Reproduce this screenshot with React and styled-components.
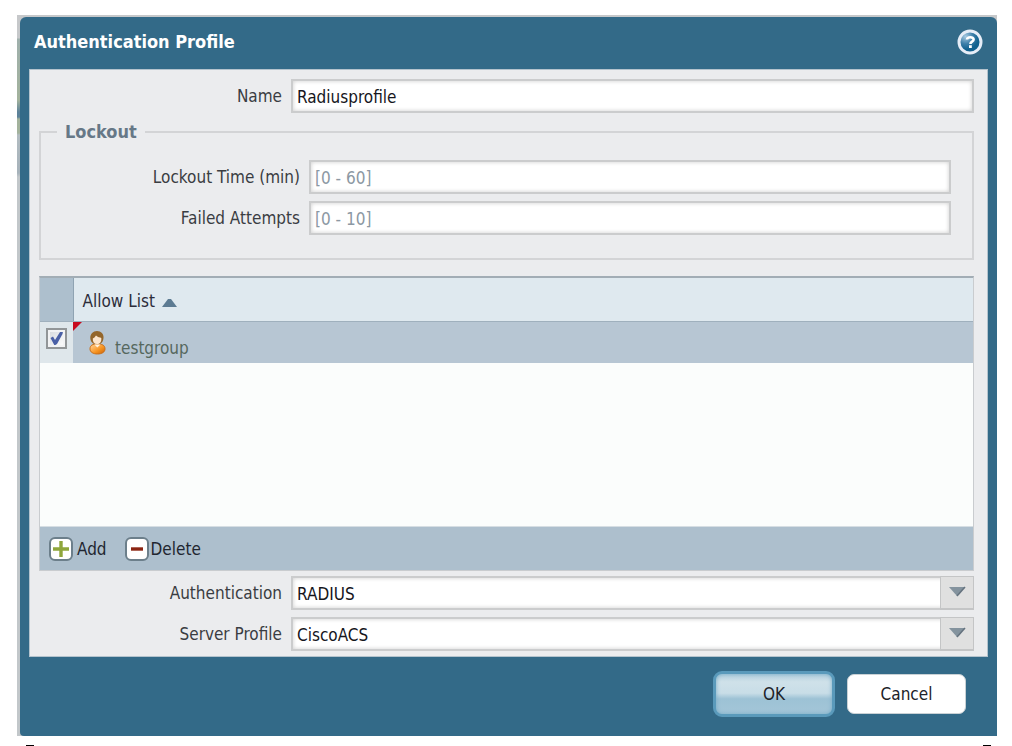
import { useState } from "react";
import styled, { createGlobalStyle } from "styled-components";

const GlobalStyle = createGlobalStyle`
  * {
    box-sizing: border-box;
  }

  body {
    margin: 0;
    background: #ffffff;
    color: #3a3d42;
    font-family: "DejaVu Sans Condensed", "Noto Sans", sans-serif;
    font-size: 17px;
    line-height: 20px;
  }

  input, select, button {
    font: inherit;
  }
`;

const Page = styled.main`
  padding: 15px 15px 0 17px;
`;

const Dialog = styled.section`
  padding: 2px 0 0 3px;
  background: linear-gradient(
    #c6c8ca 23px,
    #9fb0ac 24px,
    #a3b29c 85px,
    #5d8299 97px,
    #5d8299 102px,
    #a3b29c 104px,
    #a3b29c 118px,
    #b2bcc1 120px,
    #a6b2ba 158px,
    #c2c7ca 162px
  );
`;

const DialogInner = styled.div`
  padding: 0 9px;
  background: #336a88;
  border-radius: 6px 6px 0 4px;
`;

const TitleBar = styled.header`
  display: flex;
  align-items: center;
  justify-content: space-between;
  height: 52px;
  padding: 0 5px 2px;
`;

const Title = styled.h1`
  margin: 0;
  color: #ffffff;
  font-size: 18px;
  font-weight: bold;
`;

const HelpButton = styled.button`
  display: flex;
  padding: 0;
  border: 0;
  background: none;
  cursor: pointer;
`;

const Body = styled.div`
  padding: 9px 13px 5px 9px;
  background: #ebecee;
  border: 1px solid #b4c3cd;
`;

const FormRow = styled.div`
  display: flex;
  gap: 9px;
  height: 34px;
  margin-bottom: ${(props) => (props.$last ? 0 : 7)}px;
`;

const Label = styled.label`
  width: 243px;
  flex: none;
  padding-top: 7px;
  text-align: right;
`;

const TextInput = styled.input`
  flex: 1;
  min-width: 0;
  padding: 2px 4px 0;
  border: 2px solid #cbcccd;
  border-radius: 0;
  outline: none;
  background: #ffffff;
  box-shadow: inset 0 0 4px #cccccc;
  color: #16161c;

  &::placeholder {
    color: #8c98a3;
    opacity: 1;
  }
`;

const LockoutGroup = styled.fieldset`
  min-width: 0;
  margin: 9px 0 16px;
  padding: 18px 21px 23px 16px;
  border: 2px solid #d3d4d6;
`;

const Legend = styled.legend`
  padding: 0 8px;
  color: #667887;
  font-size: 18px;
  font-weight: bold;
`;

const Grid = styled.div`
  margin-bottom: 5px;
  border: 1px solid #c9cccf;
  border-top: 2px solid #a2adb5;
  background: #fbfdfc;
`;

const GridBody = styled.div`
  min-height: 248px;
`;

const AllowTable = styled.table`
  width: 100%;
  border-collapse: collapse;
  table-layout: fixed;
`;

const CheckHead = styled.th`
  width: 33px;
  padding: 0;
  background: #adbfcd;
  border-right: 1px solid #8fa3b2;
  border-bottom: 1px solid #9fb0bd;
`;

const ListHead = styled.th`
  height: 43px;
  padding: 3px 9px 0;
  background: #dfe9ef;
  border-bottom: 1px solid #9fb0bd;
  font-weight: normal;
  text-align: left;
`;

const SortButton = styled.button`
  display: flex;
  align-items: center;
  gap: 7px;
  padding: 0;
  border: 0;
  background: none;
  color: #2c2d3a;

  svg {
    margin-top: 4px;
  }
`;

const CheckCell = styled.td`
  padding: 6px 6px 0;
  background: #dfe7eb;
  vertical-align: top;
`;

const ListCell = styled.td`
  position: relative;
  height: 42px;
  padding: 0 16px;
  background: #b7c6d3;
  color: #56685e;
`;

const Dirty = styled.span`
  position: absolute;
  top: 0;
  left: 0;
  border-top: 9px solid #c80a1e;
  border-right: 9px solid transparent;
`;

const Member = styled.div`
  display: flex;
  align-items: center;
  gap: 9px;

  span {
    padding-top: 12px;
  }
`;

const CheckBox = styled.input`
  display: block;
  width: 21px;
  height: 21px;
  margin: 0;
  appearance: none;
  border: 2px solid #929698;
  background: linear-gradient(135deg, #d4d8dc, #ffffff);
  box-shadow: inset 0 0 0 2px #f2f3f4;

  &:checked {
    background-image: url("data:image/svg+xml,%3Csvg xmlns='http://www.w3.org/2000/svg' viewBox='0 0 17 17'%3E%3Cpath d='M2.5 8 L5 6.5 L7 10 L12 2 L15 1.5 L14.5 4 L9 14 L6.5 15.5 Z' fill='%234a60a6'/%3E%3C/svg%3E"),
      linear-gradient(135deg, #d4d8dc, #ffffff);
  }
`;

const Toolbar = styled.div`
  display: flex;
  gap: 18px;
  height: 44px;
  padding: 0 9px;
  background: #adbfcd;
  border-top: 1px solid #d6dee3;
`;

const ToolButton = styled.button`
  display: flex;
  align-items: center;
  gap: ${(props) => props.$gap}px;
  padding: 0;
  border: 0;
  background: none;
  color: #222630;
`;

const SelectWrap = styled.div`
  position: relative;
  flex: 1;
  min-width: 0;
`;

const Select = styled.select`
  width: 100%;
  height: 34px;
  padding: 2px 40px 0 4px;
  appearance: none;
  border: 2px solid #cbcccd;
  border-radius: 0;
  outline: none;
  background: #ffffff;
  box-shadow: inset 0 0 4px #cccccc;
  color: #16161c;
`;

const Trigger = styled.span`
  position: absolute;
  top: 0;
  right: 0;
  display: flex;
  justify-content: center;
  width: 34px;
  height: 34px;
  padding-top: 9px;
  border: 1px solid #c4c5c6;
  border-bottom-width: 2px;
  background: #e0e0e0;
  pointer-events: none;
`;

const Footer = styled.footer`
  display: flex;
  align-items: center;
  justify-content: flex-end;
  gap: 12px;
  height: 79px;
  padding: 0 22px 5px;
`;

const OkButton = styled.button`
  width: 122px;
  height: 46px;
  border: 3px solid #5a9abb;
  border-radius: 9px;
  background: linear-gradient(#b4d0de, #cfe1e9 20%, #c8dde7 48%, #9dc2d5 62%, #a4c6d8);
  box-shadow: inset 0 0 4px #75aac5;
  color: #202228;
`;

const CancelButton = styled.button`
  width: 119px;
  height: 40px;
  border: 1px solid #c9d1d5;
  border-radius: 7px;
  background: #ffffff;
  color: #202228;
`;

const PageMarks = styled.div`
  display: flex;
  justify-content: space-between;
  padding: 9px 6px 0 9px;
`;

const Mark = styled.span`
  width: 8px;
  height: 1px;
  background: #000000;
`;

const HelpIcon = () => (
  <svg width="26" height="26" viewBox="0 0 26 26" aria-hidden="true">
    <defs>
      <radialGradient id="helpFill" cx="0.3" cy="0.25" r="0.6">
        <stop offset="0" stopColor="#a9cbe2" />
        <stop offset="0.55" stopColor="#3f80aa" />
        <stop offset="1" stopColor="#11618f" />
      </radialGradient>
    </defs>
    <circle cx="13" cy="13" r="11" fill="url(#helpFill)" stroke="#e6edf7" strokeWidth="3" />
    <path
      d="M10 10.5 C10.2 7.4 16.8 7.4 16.6 10.6 C16.5 12.8 13.4 12.6 13.4 15"
      fill="none"
      stroke="#ffffff"
      strokeWidth="2.6"
    />
    <rect x="12" y="16.2" width="2.8" height="2.8" fill="#ffffff" />
  </svg>
);

const UserIcon = () => (
  <svg width="17" height="25" viewBox="0 0 17 25" aria-hidden="true">
    <defs>
      <linearGradient id="userShirt" x1="0" y1="0" x2="1" y2="1">
        <stop offset="0.2" stopColor="#ffc073" />
        <stop offset="0.6" stopColor="#f6921e" />
        <stop offset="1" stopColor="#c4600b" />
      </linearGradient>
    </defs>
    <path
      d="M1 19 C1 15 4 14 8 14 C13 14 16 15 16 19 C16 22 13 24 8.5 24 C4 24 1 22 1 19 Z"
      fill="url(#userShirt)"
      stroke="#c9701b"
      strokeWidth="1"
    />
    <path d="M5.5 14.5 L8.3 17.5 L11.5 14.5 Z" fill="#fff3df" />
    <path d="M8 1 C12 1 15 4 14.5 8 C14.3 11 13 13 11 14 H5 C3 13 1.3 11 1.3 8 C1.3 4 4 1 8 1 Z" fill="#94662a" />
    <path d="M3.8 8.5 C5 8 6 7 7 5.5 C8.5 7 11 7.5 12.3 8 C12.6 12 11 14 8 14 C5 14 3.6 12 3.8 8.5 Z" fill="#fde6cd" />
  </svg>
);

const ToolIcon = ({ plus }) => (
  <svg width="24" height="24" viewBox="0 0 24 24" aria-hidden="true">
    <rect x="1" y="1" width="22" height="22" rx="5" fill="#ffffff" stroke="#6c7f8b" strokeWidth="2" />
    {plus ? (
      <path d="M4 12 H20 M12 4 V20" stroke="#8fa63c" strokeWidth="3.4" />
    ) : (
      <path d="M6 12 H18" stroke="#8b2412" strokeWidth="3.4" />
    )}
  </svg>
);

const SelectField = ({ id, label, options, last }) => (
  <FormRow $last={last}>
    <Label htmlFor={id}>{label}</Label>
    <SelectWrap>
      <Select id={id} defaultValue={options[0]}>
        {options.map((option) => (
          <option key={option}>{option}</option>
        ))}
      </Select>
      <Trigger>
        <svg width="18" height="11" viewBox="0 0 18 11" aria-hidden="true">
          <path d="M1 1 H17 L9 10 Z" fill="#84939e" />
          <path d="M17 1 L9 10" stroke="#64727e" strokeWidth="1.5" />
        </svg>
      </Trigger>
    </SelectWrap>
  </FormRow>
);

const App = () => {
  const [name, setName] = useState("Radiusprofile");

  return (
    <Page>
      <GlobalStyle />
      <Dialog>
        <DialogInner>
          <TitleBar>
            <Title>Authentication Profile</Title>
            <HelpButton aria-label="Help">
              <HelpIcon />
            </HelpButton>
          </TitleBar>
          <Body>
            <FormRow $last>
              <Label htmlFor="name">Name</Label>
              <TextInput id="name" value={name} onChange={(e) => setName(e.target.value)} />
            </FormRow>
            <LockoutGroup>
              <Legend>Lockout</Legend>
              <FormRow>
                <Label htmlFor="lockout-time">Lockout Time (min)</Label>
                <TextInput id="lockout-time" placeholder="[0 - 60]" />
              </FormRow>
              <FormRow $last>
                <Label htmlFor="failed-attempts">Failed Attempts</Label>
                <TextInput id="failed-attempts" placeholder="[0 - 10]" />
              </FormRow>
            </LockoutGroup>
            <Grid>
              <GridBody>
                <AllowTable>
                  <thead>
                    <tr>
                      <CheckHead />
                      <ListHead>
                        <SortButton>
                          Allow List
                          <svg width="15" height="9" viewBox="0 0 15 9" aria-hidden="true">
                            <path d="M0 9 L6 1 H9 L15 9 Z" fill="#5c7b92" />
                          </svg>
                        </SortButton>
                      </ListHead>
                    </tr>
                  </thead>
                  <tbody>
                    <tr>
                      <CheckCell>
                        <CheckBox type="checkbox" defaultChecked aria-label="testgroup" />
                      </CheckCell>
                      <ListCell>
                        <Dirty />
                        <Member>
                          <UserIcon />
                          <span>testgroup</span>
                        </Member>
                      </ListCell>
                    </tr>
                  </tbody>
                </AllowTable>
              </GridBody>
              <Toolbar>
                <ToolButton $gap={4}>
                  <ToolIcon plus />
                  Add
                </ToolButton>
                <ToolButton $gap={2}>
                  <ToolIcon />
                  Delete
                </ToolButton>
              </Toolbar>
            </Grid>
            <SelectField id="authentication" label="Authentication" options={["RADIUS"]} />
            <SelectField id="server-profile" label="Server Profile" options={["CiscoACS"]} last />
          </Body>
          <Footer>
            <OkButton>OK</OkButton>
            <CancelButton>Cancel</CancelButton>
          </Footer>
        </DialogInner>
      </Dialog>
      <PageMarks>
        <Mark />
        <Mark />
      </PageMarks>
    </Page>
  );
};

export default App;
